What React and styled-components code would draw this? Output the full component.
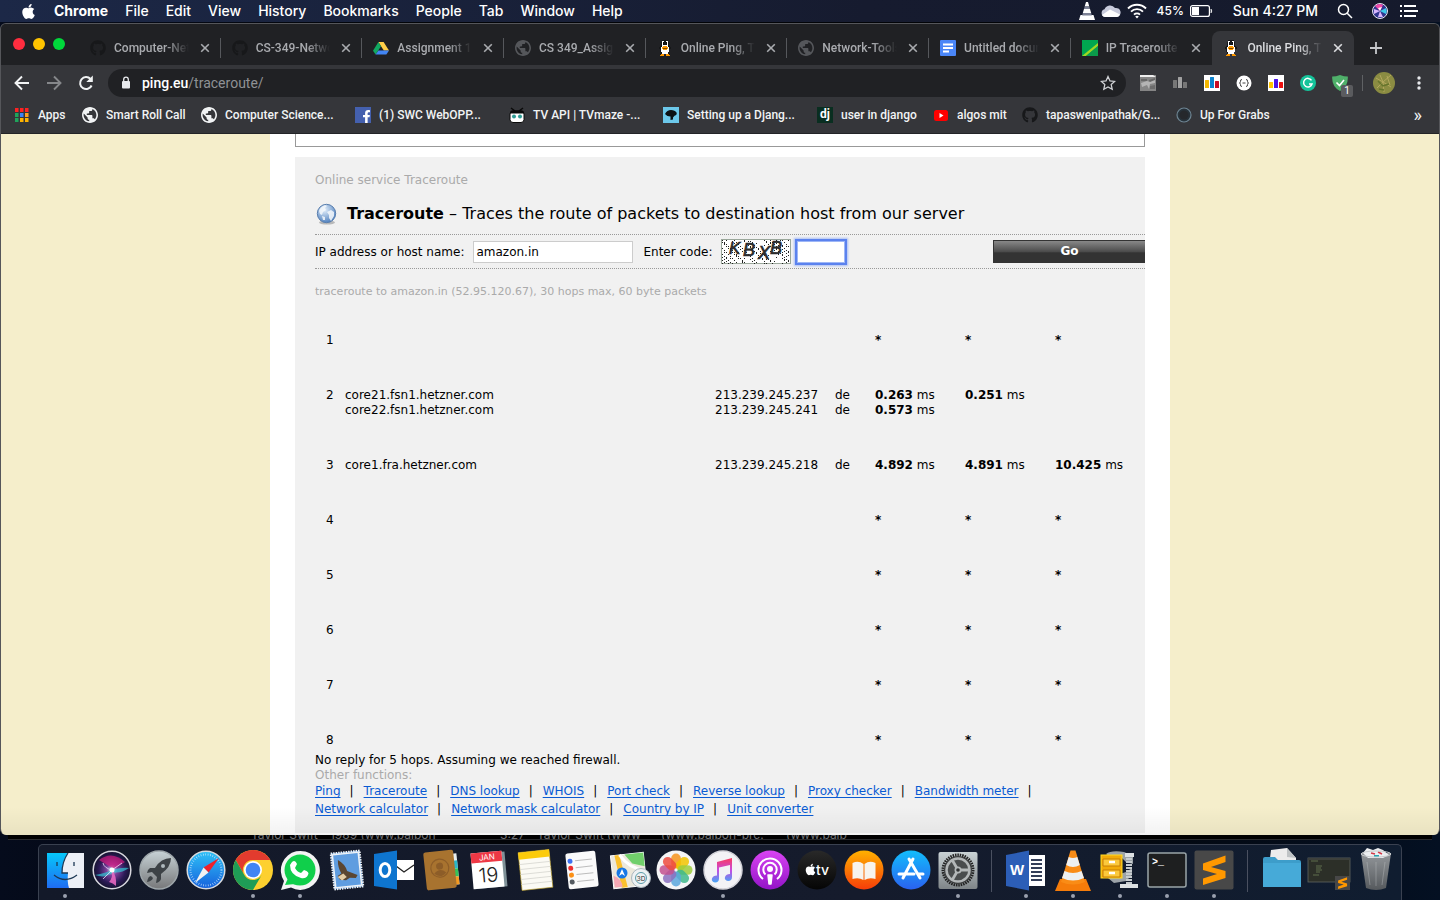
import React from "react";
import styled, { createGlobalStyle, css } from "styled-components";
import { FaApple, FaGithub, FaFacebookF } from "react-icons/fa";
import { MdPublic } from "react-icons/md";

const menuFont = css`font-family: Inter, "Liberation Sans", sans-serif;`;
const uiFont = css`font-family: Roboto, "Liberation Sans", sans-serif;`;

const GlobalStyle = createGlobalStyle`
  *, *::before, *::after { box-sizing: border-box; }
  html, body { margin: 0; background: #0a101f; overflow: hidden; }
  button, input { font: inherit; }
  svg { display: block; flex: none; }
`;

const Desktop = styled.div`
  height: 100vh;
  display: flex;
  flex-direction: column;
  background: linear-gradient(90deg, #050b1c, #020408 30%, #020408 70%, #041022);
`;

/* ---------- menu bar ---------- */

const MenuBar = styled.header`
  ${menuFont}
  height: 22px;
  flex: none;
  display: flex;
  align-items: center;
  justify-content: space-between;
  padding: 0 22px 0 20px;
  background: linear-gradient(90deg, #1c2847, #161b2f 60%, #151a2c);
  color: #fff;
  font-size: 14px;
  line-height: 22px;
`;
const MenuGroup = styled.nav`
  display: flex;
  align-items: center;
  gap: 17px;
`;
const MenuItem = styled.button`
  border: 0;
  padding: 0;
  background: none;
  color: #fff;
  font-weight: ${(p) => (p.$bold ? 700 : 500)};
  white-space: nowrap;
`;
const StatusGroup = styled.div`
  display: flex;
  align-items: center;
  gap: ${(p) => p.$gap}px;
  font-weight: 500;
  white-space: nowrap;
`;
const Percent = styled.span`font-size: 12px; margin-left: 4px;`;

/* ---------- browser window ---------- */

const Window = styled.main`
  flex: 1;
  min-height: 0;
  display: flex;
  flex-direction: column;
  margin-top: 1px;
  border: 1px solid #55565a;
  border-bottom: 0;
  border-radius: 6px;
  overflow: hidden;
  background: #35363a;
`;
const TabStrip = styled.div`
  ${uiFont}
  height: 41px;
  flex: none;
  display: flex;
  align-items: stretch;
  padding-top: 7px;
  background: #202124;
`;
const Lights = styled.div`
  display: flex;
  gap: 8px;
  padding: 7px 0 0 12px;
  width: 78px;
  flex: none;
`;
const Light = styled.span`
  width: 12px;
  height: 12px;
  border-radius: 50%;
  background: ${(p) => p.$color};
`;
const TabList = styled.div`
  flex: 1;
  display: flex;
  min-width: 0;
`;
const Tab = styled.div`
  flex: 1 1 0;
  min-width: 0;
  display: flex;
  align-items: center;
  gap: 8px;
  padding: 0 8px 0 11px;
  position: relative;
  border-radius: 8px 8px 0 0;
  background: ${(p) => (p.$active ? "#35363a" : "transparent")};
  color: ${(p) => (p.$active ? "#dcdde0" : "#a9abaf")};
  &::after {
    content: "";
    display: ${(p) => (p.$divider ? "block" : "none")};
    position: absolute;
    right: 0;
    top: 7px;
    width: 1px;
    height: 20px;
    background: #56585c;
  }
`;
const TabTitle = styled.span`
  flex: 1;
  min-width: 0;
  overflow: hidden;
  white-space: nowrap;
  font-size: 12px;
  line-height: 16px;
  font-weight: 500;
  mask-image: linear-gradient(90deg, #000 68%, transparent 100%);
`;
const IconButton = styled.button`
  display: grid;
  place-items: center;
  flex: none;
  width: ${(p) => p.$size || 16}px;
  height: ${(p) => p.$size || 16}px;
  border: 0;
  padding: 0;
  background: none;
  color: ${(p) => p.$color || "inherit"};
`;
const NewTab = styled.div`
  width: 85px;
  flex: none;
  display: flex;
  align-items: center;
  padding-left: 14px;
`;
const Toolbar = styled.div`
  ${uiFont}
  height: 35px;
  flex: none;
  display: flex;
  align-items: center;
  padding: 0 12px;
`;
const NavButtons = styled.div`
  display: flex;
  gap: 14px;
  width: 95px;
  flex: none;
`;
const Omnibox = styled.label`
  flex: 1;
  height: 28px;
  border-radius: 14px;
  background: #202124;
  display: flex;
  align-items: center;
  gap: 11px;
  padding: 0 10px 0 13px;
  font-size: 14px;
`;
const Address = styled.span`
  flex: 1;
  color: #8f9195;
  line-height: 20px;
  b { font-weight: 500; color: #fff; }
`;
const Extensions = styled.div`
  display: flex;
  align-items: center;
  gap: 16px;
  padding-left: 14px;
`;
const Separator = styled.span`
  width: 1px;
  height: 16px;
  margin-left: -2px;
  margin-right: -6px;
  background: #5f6164;
`;
const BookmarkBar = styled.nav`
  ${uiFont}
  height: 34px;
  flex: none;
  display: flex;
  align-items: center;
  gap: 16px;
  padding: 0 17px 3px 13px;
  border-bottom: 1px solid #232427;
  font-size: 12px;
`;
const Bookmark = styled.a`
  display: flex;
  align-items: center;
  gap: 8px;
  color: #f1f3f4;
  text-decoration: none;
  line-height: 16px;
  white-space: nowrap;
  font-weight: 500;
  span { width: ${(p) => p.$width}px; }
`;
const More = styled.button`
  margin-left: auto;
  border: 0;
  padding: 0;
  background: none;
  color: #f1f3f4;
  font-size: 18px;
  line-height: 16px;
`;

/* ---------- web page ---------- */

const Viewport = styled.div`
  flex: 1;
  min-height: 0;
  overflow: hidden;
  position: relative;
  display: flex;
  justify-content: center;
  background: #f5eecb;
  font-family: "DejaVu Sans", Verdana, sans-serif;
  font-size: 12px;
  line-height: 15px;
  color: #000;
  &::after {
    content: "";
    position: absolute;
    inset: auto 0 0 0;
    height: 28px;
    background: linear-gradient(transparent, rgba(0, 0, 0, 0.05));
  }
`;
const Page = styled.div`
  width: 900px;
  max-width: 100%;
  padding: 0 25px;
  background: #fff;
  display: flex;
  flex-direction: column;
`;
const UpperBox = styled.div`
  height: 13px;
  flex: none;
  border: 1px solid #999;
  border-top: 0;
  margin-bottom: 10px;
`;
const Panel = styled.section`
  flex: 1;
  background: #f1f1f1;
  padding: 16px 0 0 20px;
  margin-bottom: 2px;
`;
const Muted = styled.p`
  margin: 0;
  color: #aaa;
`;
const ResultLine = styled(Muted)`
  margin-top: 15px;
  font-size: 11px;
`;
const Title = styled.h1`
  display: flex;
  align-items: center;
  gap: 8px;
  margin: 14px 0 8px;
  font-size: 16px;
  line-height: 24px;
  font-weight: 400;
`;
const Form = styled.form`
  display: flex;
  align-items: center;
  height: 35px;
  border: 1px dotted #999;
  border-width: 1px 0;
`;
const FieldLabel = styled.label`
  padding-top: 2px;
`;
const Field = styled.input`
  width: ${(p) => p.$width}px;
  height: 22px;
  margin: 0 10px 0 9px;
  padding: 0 2px;
  border: 1px solid #ccc;
  border-radius: 0;
  background: #fff;
  color: #000;
`;
const CodeField = styled(Field)`
  margin: 0 0 0 6px;
  outline: 2px solid #5b82ee;
  border-color: #9db6f6;
  box-shadow: 0 0 2px 3px #a9bdf5;
`;
const Captcha = styled.svg`margin-left: 9px;`;
const GoButton = styled.button`
  width: 152px;
  height: 23px;
  margin-left: auto;
  padding: 0;
  border: 1px solid #333;
  border-right: 0;
  background: linear-gradient(#888, #4a4a4a 52%, #333 56%, #333);
  color: #fff;
  font-weight: 700;
`;
const Hops = styled.table`
  width: 100%;
  margin-top: -1px;
  border-collapse: collapse;
  table-layout: fixed;
  td {
    padding: 35px 0 5px;
    vertical-align: top;
    white-space: pre-line;
  }
  td:first-child { padding-left: 11px; }
`;
const Links = styled.nav`
  display: flex;
  flex-wrap: wrap;
  line-height: 18px;
  max-width: 760px;
  margin-top: -1px;
`;
const LinkItem = styled.span`
  white-space: nowrap;
  a { color: #0a5bd3; text-underline-offset: 2px; }
  i { font-style: normal; margin: 0 10px 0 9px; }
`;

/* ---------- strip of the window behind, and the dock ---------- */

const BehindStrip = styled.div`
  ${menuFont}
  height: 5px;
  flex: none;
  margin: 0 8px;
  overflow: hidden;
  display: flex;
  align-items: flex-end;
  border-bottom: 1px solid #2a2b2e;
  background: #000;
  color: #707276;
  font-size: 12px;
  line-height: 8px;
  white-space: nowrap;
  padding-left: 243px;
`;
const BehindCell = styled.span`
  width: ${(p) => p.$width}px;
`;
const DockArea = styled.footer`
  flex: none;
  display: flex;
  justify-content: center;
  height: 60px;
  padding-top: 4px;
`;
const Dock = styled.div`
  display: flex;
  align-items: flex-start;
  padding: 3px 2px 0;
  border: 1px solid #3a4150;
  border-bottom: 0;
  border-radius: 5px 5px 0 0;
  background: linear-gradient(90deg, #131929, #151b2c 60%, #101d30);
`;
const DockButton = styled.button`
  width: 47px;
  padding: 0;
  border: 0;
  background: none;
  display: flex;
  flex-direction: column;
  align-items: center;
  &::after {
    content: "";
    width: 4px;
    height: 4px;
    margin-top: 2px;
    border-radius: 50%;
    background: ${(p) => (p.$running ? "#9aa0ae" : "transparent")};
  }
`;
const DockRule = styled.span`
  width: 1px;
  height: 42px;
  margin: 2px 10px 0;
  background: #4a5060;
`;

/* ---------- small icons ---------- */

const Svg = ({ s = 16, w, h, box, children, ...rest }) => (
  <svg width={w || s} height={h || s} viewBox={box || "0 0 16 16"} fill="none" aria-hidden="true" {...rest}>{children}</svg>
);
const Close = () => (
  <Svg><path d="M4.2 4.2l7.6 7.6M11.8 4.2l-7.6 7.6" stroke="currentColor" strokeWidth="1.6" /></Svg>
);
const Penguin = () => (
  <Svg shapeRendering="crispEdges">
    <path d="M5 0h6v2h1v4h1v1h1v2h-2v3h-1v2H4v-2H3V9H2V7h1V6h1V2h1z" fill="#161719" />
    <path d="M5 1h2v4h2V1h2v6h1v5h-1v2H5v-2H4V7h1z" fill="#fff" />
    <path d="M6 2h1v3H6zM9 2h1v3H9z" fill="#111" />
    <path d="M6 6h4v1h1v2h-1v1H6V9H5V7h1zM4 14h3v2H3v-1h1zM9 14h3v1h1v1H9z" fill="#ff9800" />
    <path d="M6 8h4v1H6z" fill="#7b4a00" />
  </Svg>
);
const Drive = () => (
  <Svg>
    <path d="M5.4 2h5.2L16 10.6h-5.2z" fill="#ffcf48" />
    <path d="M5.4 2L0 10.8 2.6 14.6 8 6.2z" fill="#11a861" />
    <path d="M5.4 10.6H16L13.4 14.6H2.6z" fill="#4285f4" />
  </Svg>
);
const Docs = () => (
  <Svg><rect width="16" height="16" rx="1" fill="#4a86f7" /><path d="M3 4.5h10M3 8h10M3 11.5h6" stroke="#fff" strokeWidth="1.8" /></Svg>
);
const GreenSquare = () => (
  <Svg><path d="M0 0h16v16H0z" fill="#00a650" /><path d="M16 3v3L4 16H0z" fill="#9fd622" /><path d="M16 6v10H4z" fill="#0b9a4a" /></Svg>
);
const Github = ({ s = 16 }) => <FaGithub size={s} color="#17181a" />;
const Globe = ({ color }) => <Svg box="2 2 20 20"><MdPublic size={24} color={color} /></Svg>;
const Apps = () => (
  <Svg>{[0, 1, 2].map((r) => [0, 1, 2].map((c) => (
    <rect key={`${r}${c}`} x={1 + c * 5} y={1 + r * 5} width="3.500" height="4"
      fill={[["#f22", "#f22", "#f22"], ["#1fa45b", "#3b82f6", "#ff9f1c"], ["#1fa45b", "#ffb300", "#ffb300"]][r][c]} />
  )))}</Svg>
);
const Facebook = () => (
  <Svg><path d="M0 0h16v16H0z" fill="#4460ae" /><FaFacebookF x="5" y="3" size={13} color="#fff" /></Svg>
);
const TvMaze = () => (
  <Svg>
    <path d="M2 1l4 3M14 1l-4 3" stroke="#0a0a0a" strokeWidth="1.5" />
    <rect x="1" y="4" width="14" height="11.500" rx="3" fill="#fff" stroke="#0a0a0a" strokeWidth="1" />
    <path d="M3 3.500h10q2 0 2 3H1q0-3 2-3z" fill="#0a0a0a" />
    <circle cx="5" cy="9.500" r="2" fill="#2f9c95" /><circle cx="11" cy="9.500" r="2" fill="#2f9c95" />
  </Svg>
);
const Setting = () => (
  <Svg><path d="M0 0h16v16H0z" fill="#6cc8ea" /><path d="M2 7q2-4 6-4 4 0 5.500 2.500Q14.500 8 11.500 8.800L10 10.500v2L7.500 13V9.500Q4 9.500 2 7z" fill="#0b1114" /></Svg>
);
const DjangoTile = styled.span`
  && { width: 16px; }
  height: 16px;
  background: #092e20;
  color: #fff;
  font-size: 12px;
  line-height: 15px;
  font-weight: 700;
  text-align: center;
`;
const Youtube = () => (
  <Svg><rect x="1" y="3" width="14" height="11" rx="2.500" fill="#f00" /><path d="M6.500 6v5l4-2.500z" fill="#fff" /></Svg>
);
const Ring = () => (
  <Svg><circle cx="8" cy="8" r="7" stroke="#6d8492" strokeWidth="1.200" fill="#27323a" /><circle cx="8" cy="8" r="4.500" fill="#25282c" /></Svg>
);
const Vlc = () => (
  <Svg w={16} h={18} box="0 0 16 18">
    <path d="M7 0h2l1.300 4.500H5.700zM5 7h6l1.200 4H3.800zM1.500 13h13L16 18H0z" fill="#fff" />
    <path d="M5.700 4.500h4.600L11 7H5zM3.800 11h8.400l.6 2.500H3.200z" fill="#7d8296" />
  </Svg>
);
const Cloud = () => (
  <Svg w={20} h={14} box="0 0 20 14">
    <path d="M4 13a4 4 0 01-.500-7.800A6 6 0 0114 4a4.600 4.600 0 012 9z" fill="#c8cbdc" />
    <path d="M1 11l8-5.500 10 5a3.500 3.500 0 01-3 2.500H4a4 4 0 01-3-2z" fill="#fff" />
  </Svg>
);
const Wifi = () => (
  <Svg w={20} h={16} box="0 0 20 16" stroke="#fff" strokeWidth="1.900">
    <path d="M1 5.500a12.800 12.800 0 0118 0M4 8.600a8.500 8.500 0 0112 0M7 11.600a4.300 4.300 0 016 0" /><path d="M10 15.500l-1.800-2q1.800-1.400 3.600 0z" fill="#fff" stroke="none" />
  </Svg>
);
const Battery = () => (
  <Svg w={24} h={12} box="0 0 24 12">
    <rect x=".6" y=".6" width="18.800" height="10.800" rx="2" stroke="#fff" strokeWidth="1.200" />
    <rect x="2" y="2" width="7" height="8" fill="#fff" /><path d="M21 4q1.600 2 0 4z" fill="#fff" stroke="#fff" strokeWidth=".6" />
  </Svg>
);
const Search = () => (
  <Svg stroke="#fff" strokeWidth="1.500"><circle cx="6.500" cy="6.500" r="5" /><path d="M10.200 10.200L15 15" /></Svg>
);
const SiriSmall = () => (
  <Svg><circle cx="8" cy="8" r="7.500" fill="#30358e" stroke="#e7e7ef" /><path d="M8 8L3 3a7 7 0 018-1z" fill="#ee4aa8" /><path d="M8 8l6-3a7 7 0 010 6z" fill="#3dc8e8" /><path d="M8 8l-6 3V6zM8 8l3 6H6z" fill="#d9b8ff" /><path d="M8 8L6 5l4-1z" fill="#fff" /></Svg>
);
const ListIcon = () => (
  <Svg w={18} h={12} box="0 0 18 12" stroke="#fff" strokeWidth="2"><path d="M0 1h2M4 1h12M0 6h2M4 6h14M0 11h2M4 11h12" /></Svg>
);
const Arrow = ({ flip }) => (
  <Svg s={18} box="0 0 18 18" stroke={flip ? "#85878a" : "#f1f3f4"} strokeWidth="1.900">
    <path d={flip ? "M2 9h13M9 2.500L15.500 9 9 15.500" : "M16 9H3M9 2.500L2.500 9 9 15.500"} />
  </Svg>
);
const Reload = () => (
  <Svg s={18} box="0 0 18 18"><path d="M14.600 11.500A6 6 0 1113.500 5" stroke="#f1f3f4" strokeWidth="2" /><path d="M15.800 1.500V8H9.300z" fill="#f1f3f4" /></Svg>
);
const Lock = () => (
  <Svg w={10} h={14} box="0 0 10 14"><rect x="1" y="5" width="8" height="7.500" rx="1" fill="#e8eaed" /><path d="M2.700 5V3.500a2.300 2.300 0 014.600 0V5" stroke="#e8eaed" strokeWidth="1.300" /></Svg>
);
const Star = () => (
  <Svg><path d="M8 1.500l2 4.400 4.700.5-3.500 3.200 1 4.700L8 11.900l-4.200 2.400 1-4.700L1.300 6.400 6 5.900z" stroke="#cfd1d4" strokeWidth="1.300" /></Svg>
);
const Bars = ({ bg, colors, heights }) => (
  <Svg>{bg && <path d="M0 0h16v16H0z" fill={bg} />}{heights.map((h, i) => <rect key={i} x={1 + i * 5} y={13 - h} width="4" height={h} rx=".5" fill={colors[i]} />)}</Svg>
);
const extensions = [
  ["Image tool", <Svg><path d="M0 0h16v16H0z" fill="#858585" /><path d="M0 0h13l3 2H0z" fill="#eee" /><path d="M1 4h6v2H1zM9 5l6-2v3l-5 2z" fill="#666" /><path d="M1 8l6-2 3 1 5-2v3l-5 1-1 5-2-4-5 2z" fill="#b4b4b4" /><path d="M10 11l5-1v4h-5z" fill="#6c6c6c" /></Svg>],
  ["Statistics", <Bars colors={["#777", "#a2a2a2", "#777"]} heights={[8, 11, 6]} />],
  ["Traffic", <Bars bg="#fff" colors={["#f3b600", "#0d83cf", "#c90c23"]} heights={[8, 11, 7]} />],
  ["Brackets", <Svg><circle cx="8" cy="8" r="7.500" fill="#fff" /><path d="M6 4.500q-1.800 0-1.500 1.800Q4.500 8 3.400 8q1.100 0 1.100 1.700Q4.200 11.500 6 11.500M10 4.500q1.800 0 1.500 1.800Q11.500 8 12.600 8q-1.100 0-1.100 1.700Q11.800 11.500 10 11.500M6.500 8h3" stroke="#444" strokeWidth="1" /></Svg>],
  ["Charts", <Bars bg="#fff" colors={["#ffc400", "#4a12e8", "#e11"]} heights={[6, 9, 6]} />],
  ["Grammar", <Svg><circle cx="8" cy="8" r="8" fill="#15c39a" /><path d="M11.500 5.300A4.300 4.300 0 1012 9H9" stroke="#fff" strokeWidth="1.500" /></Svg>],
];
const Shield = () => (
  <Svg><path d="M8 0q4 1.500 7.800 1.500Q16.500 11.500 8 16-.5 11.500.2 1.500 4 1.500 8 0z" fill="#4fb06a" /><path d="M4.500 7.500l3 3L12 5" stroke="#fff" strokeWidth="1.600" /></Svg>
);
const ShieldHolder = styled.span`position: relative; width: 16px;`;
const Badge = styled.span`
  position: absolute;
  left: 9px;
  top: 10px;
  width: 12px;
  height: 12px;
  border-radius: 2px;
  background: #5a5b5e;
  color: #fff;
  font-size: 10px;
  line-height: 12px;
  text-align: center;
`;
const Avatar = () => (
  <Svg s={22} box="0 0 22 22"><circle cx="11" cy="11" r="11" fill="#8b8c42" /><path d="M3 6l7 4 8-7M4 16l6-6 8 5M7 3l3 7 1 10M14 4l3 9" stroke="#b3a85d" strokeWidth="1" /><path d="M5 9l5 5 6-2M6 17l5 1" stroke="#66752c" strokeWidth="1.500" /></Svg>
);
const Dots = () => (
  <Svg><g fill="#e8eaed"><circle cx="8" cy="3" r="1.700" /><circle cx="8" cy="8" r="1.700" /><circle cx="8" cy="13" r="1.700" /></g></Svg>
);
const WorldIcon = () => (
  <Svg s={24} box="0 0 24 24">
    <defs><radialGradient id="world" cx=".4" cy=".3" r=".8"><stop offset="0" stopColor="#e3effb" /><stop offset="1" stopColor="#3f74b8" /></radialGradient></defs>
    <ellipse cx="12" cy="20.500" rx="8" ry="2" fill="#b9b9b9" />
    <circle cx="11.500" cy="11.500" r="9.200" fill="url(#world)" stroke="#5a7fae" />
    <path d="M4 9q1-4 6-6l2 1-2 2 1 2-3 2-1 3-2-1zM12 10l4-2 3 2v4l-3 5-2-3v-3zM7 14l3 1v3l-2 0z" fill="#f4f8fc" opacity=".85" />
  </Svg>
);

const noise = Array.from({ length: 420 }, (_, i) => {
  const v = (i * 7919 + i * i * 131) % 1656;
  return `M${1 + (v % 68)} ${1 + Math.floor(v / 69)}h1v1h-1z`;
}).join("");
const CaptchaImage = () => (
  <Captcha width="70" height="25" viewBox="0 0 70 25" role="img" aria-label="Code picture">
    <rect x=".5" y=".5" width="69" height="24" fill="#fff" stroke="#9aa79a" />
    <path d={noise} fill="#222" shapeRendering="crispEdges" />
    <g fill="#2c2c2c" stroke="#2c2c2c" strokeWidth=".7" fontFamily="Liberation Sans" fontStyle="italic" fontSize="18">
      <text x="8" y="15" fontSize="17">K</text><text x="22" y="17">B</text><text x="37" y="20">X</text><text x="49" y="15">B</text>
    </g>
  </Captcha>
);

/* ---------- dock icons, drawn round the origin ---------- */

const Disc = ({ fill, stroke = "none", r = 19.5 }) => <circle r={r} fill={fill} stroke={stroke} strokeWidth="1.5" />;
const Grad = ({ id, a, b, m }) => (
  <linearGradient id={id} x1="0" y1="0" x2="0" y2="1"><stop stopColor={a} />{m && <stop offset=".5" stopColor={m} />}<stop offset="1" stopColor={b} /></linearGradient>
);
const sublimeMark = "M-11-6.500L11.500-14.500V-8L-3-3 11.500 1V8L-11 15V8.500L3 4-11 0z";
const petals = ["#f7941d", "#f2c400", "#9ccc3c", "#3fb98b", "#5aa7dd", "#8a70c0", "#c2508f", "#ee4b3e"];

const apps = {
  Finder: <><Grad id="fd" a="#06c8fb" b="#1f6cf2" /><rect x="-18" y="-17" width="37" height="35" fill="url(#fd)" /><path d="M3-17q-6 9-6 20H3q-1 9 1 15h15v-35z" fill="#eceff6" /><path d="M-8-8v4M9-8v4M-11 5Q0 14 12 5M3-17Q-3-8-3 3H3" stroke="#1c3754" strokeWidth="1.300" fill="none" /></>,
  Siri: <><radialGradient id="sr"><stop stopColor="#c9ecf5" /><stop offset=".3" stopColor="#7b3f9a" /><stop offset=".7" stopColor="#2b1a56" /><stop offset="1" stopColor="#14122e" /></radialGradient><Disc fill="url(#sr)" stroke="#d7d7de" r={18.8} /><path d="M-13-10Q0-20 13-8L2-1z" fill="#e01c82" opacity=".65" /><path d="M-17 5Q-6 3 0 0q10-3 17-2Q8 4 1 2-6 9-17 5z" fill="#33c9d6" opacity=".7" /><path d="M0 0q5 6 4 16-3-3-7-4Q1 8 0 0z" fill="#f06bc4" opacity=".85" /><path d="M0 0q-8-2-9-7M0 0l-9 9M0 0l10-7" stroke="#e9dcf7" strokeWidth="1" fill="none" opacity=".8" /><circle r="2.500" fill="#fff" /></>,
  Launchpad: <><Grad id="lp" a="#c7d2d6" b="#77787a" /><Disc fill="url(#lp)" stroke="#9ea6aa" r={19} /><path d="M12-12Q2-12-4-2l-5 0q-3 2-3 5l5-1 5 5-1 6q4-1 5-4V4Q12-3 12-12z" fill="#3d4246" /><circle cx="4" cy="-4" r="2" fill="#aeb8bc" /><path d="M-8 6q-3 0-4 6 5-1 6-4z" fill="#3d4246" /></>,
  Safari: <><Grad id="sf" a="#2ec2f7" b="#1660dc" /><Disc fill="url(#sf)" stroke="#d7dade" r={18.8} /><circle r="15.500" fill="none" stroke="#cfeaff" strokeWidth="2" strokeDasharray=".6 1.800" /><path d="M13-12L2.500 2.500-2.500-2.500z" fill="#f0202c" /><path d="M-11 13l8.500-15.500 5 5z" fill="#f2f2f2" /></>,
  Chrome: <><Disc fill="#fdd02f" r={20} /><path d="M-17.300-10A20 20 0 0117.300-10H0A10 10 0 00-8.700 5z" fill="#e23b2e" /><path d="M-17.300-10A20 20 0 000 20L8.700 5A10 10 0 01-8.700 5z" fill="#1f9d56" /><circle r="9" fill="#fff" /><circle r="7.300" fill="#4285f4" /></>,
  WhatsApp: <><path d="M-19 20l3-9A19.500 19.500 0 11-9 17.500z" fill="#f4f4f4" /><circle cx="0" cy="0" r="15.500" fill="#10cf4b" /><path d="M-15 15l4-9 6 8z" fill="#10cf4b" /><path d="M-8-8q3-3 5 2l-2 4q2 4 6 5l3-3q6 2 4 5-2 4-7 3-11-3-11-13z" fill="#fff" /></>,
  Mail: <g transform="rotate(-6)"><rect x="-14.500" y="-18" width="29" height="36" fill="#6ba5e5" stroke="#eef2f6" strokeWidth="2" strokeDasharray="1.500 1" /><rect x="-13" y="-16.500" width="26" height="33" fill="#5f9de0" stroke="#eef2f6" strokeWidth="1.500" /><path d="M-8-11q7 5 8 12l10 5-2 3-6-1-4 2-6-1-2-4 4-2Q-9-4-8-11z" fill="#5b4632" /><path d="M-10 6l6-3 3 4-5 3z" fill="#e5cda6" /></g>,
  Outlook: <><rect x="1" y="-10" width="19" height="20" fill="#fff" /><path d="M2-4l8 6L20-5" stroke="#222" strokeWidth="1.300" fill="none" /><path d="M-20-16L3-19.500v39L-20 16z" fill="#0e75cf" /><ellipse cx="-9" cy="0" rx="4.800" ry="6.500" fill="none" stroke="#fff" strokeWidth="3" /></>,
  Contacts: <g transform="rotate(-6)"><rect x="10" y="-15" width="7" height="31" fill="#e8eef0" /><path d="M13-8h4v8h-4z" fill="#2ab6c9" /><path d="M13 0h4v8h-4z" fill="#35c35b" /><path d="M13 8h4v8h-4z" fill="#f59b23" /><rect x="-16" y="-19" width="30" height="38" rx="2" fill="#a8732f" /><circle cx="-1" cy="-2" r="9" fill="none" stroke="#8d5d28" strokeWidth="1.200" /><circle cx="-1" cy="-4" r="3.500" fill="#8d5d28" /><path d="M-7 3q6-6 12 0-6 6-12 0z" fill="#8d5d28" /></g>,
  Calendar: <g transform="rotate(-5)"><rect x="-15" y="-17" width="33" height="35" fill="#7f9198" /><rect x="-16" y="-18" width="31" height="36" fill="#fff" /><path d="M-16-18h31v10h-31z" fill="#ee3845" /><text y="-10" textAnchor="middle" fontSize="8" fill="#fff" fontFamily="Inter">JAN</text><text y="12" textAnchor="middle" fontSize="20" fontWeight="300" fill="#222" fontFamily="Inter">19</text></g>,
  Notes: <g transform="rotate(-6)"><rect x="-15" y="-19" width="31" height="38" fill="#fbfaf4" stroke="#b89a1d" strokeWidth=".6" /><path d="M-15-19h31v7h-31z" fill="#fccb0b" /><path d="M-15-7h31M-15-2h31M-15 3h31M-15 8h31M-15 13h31" stroke="#d6d6d0" strokeWidth=".8" /></g>,
  Reminders: <g transform="rotate(-6)"><rect x="-15" y="-18" width="30" height="36" rx="2" fill="#fafafa" /><path d="M-6-10h17M-6-3h17M-6 4h17M-6 11h17" stroke="#bcbcbc" /><circle cx="-11" cy="-10" r="2.500" fill="#3d70ef" /><circle cx="-11" cy="-3" r="2.500" fill="#ee2e2e" /><circle cx="-11" cy="4" r="2.500" fill="#fb9016" /><circle cx="-11" cy="11" r="2.500" fill="#555b61" /></g>,
  Maps: <><g transform="rotate(-6)"><rect x="-17" y="-16" width="33" height="33" fill="#ece8dc" stroke="#fff" /><path d="M-3-16h19v14L4-6z" fill="#71cf6b" /><path d="M-13-16h5l5 33h-6z" fill="#fbc02d" /><path d="M-16 4v12h8q0-8-8-12z" fill="#f5a8b4" /><path d="M-8-16Q0-2 15 2" stroke="#fff" strokeWidth="3" fill="none" /></g><circle cx="-7" cy="3" r="5.500" fill="#1878e6" /><path d="M-7-1l3 7-3-2-3 2z" fill="#fff" /><circle cx="12" cy="8" r="9.500" fill="#edf1f3" stroke="#aab6bd" /><circle cx="12" cy="8" r="5.500" fill="none" stroke="#5b9cab" /><text x="12" y="10.500" textAnchor="middle" fontSize="6.500" fontFamily="Inter" fill="#333">3D</text></>,
  Photos: <><Disc fill="#f5f5f6" />{petals.map((c, i) => <rect key={c} x="-4.800" y="-16.500" width="9.600" height="15" rx="4.800" fill={c} opacity=".85" transform={`rotate(${i * 45})`} />)}</>,
  Music: <><Disc fill="#f3f3f6" stroke="#d4d4da" r={19} /><Grad id="mu" a="#fb3b5d" b="#45a7f5" m="#c64be2" /><path d="M-6-8L9-12V7q0 4-4 4-4-1-3-4 1-3 5-3V-5L-4-2.500v11q0 4-4 4-4-1-3-4 1-3 5-3z" fill="url(#mu)" /></>,
  Podcasts: <><Grad id="pc" a="#d944f2" b="#9314c8" /><Disc fill="url(#pc)" /><g fill="none" stroke="#fff" strokeWidth="2"><path d="M-7 9a11.500 11.500 0 1114 0M-4.500 4.500a6.700 6.700 0 119 0" /></g><circle cy="-1" r="3" fill="#fff" /><path d="M-2 5h4l-1 9h-2z" fill="#fff" stroke="#fff" strokeWidth="1.500" strokeLinejoin="round" /></>,
  TV: <><Grad id="tv" a="#292929" b="#050505" /><Disc fill="url(#tv)" /><FaApple x="-13" y="-7" size={13} color="#fff" /><text x="-1" y="5" fontSize="14" fontWeight="500" fill="#fff" fontFamily="Inter">tv</text></>,
  Books: <><Grad id="bk" a="#ffb100" b="#f63d09" /><Disc fill="url(#bk)" /><path d="M-.5-6q-5-4-11-1V9q6-2 11 1zM.5-6q5-4 11-1V9q-6-2-11 1z" fill="#f7f3ee" /></>,
  "App Store": <><Grad id="as" a="#12bdfc" b="#2a62f0" /><Disc fill="url(#as)" /><path d="M2-11L-8 8M-2-11L9 8M-12 4H3M7 4h5" stroke="#fff" strokeWidth="3" strokeLinecap="round" /></>,
  Settings: <><Grad id="st" a="#c9d2d5" b="#7f8588" /><rect x="-19.500" y="-18" width="39" height="37" rx="2" fill="url(#st)" /><circle r="15" fill="none" stroke="#222" strokeWidth="3" strokeDasharray="1.500 .9" /><circle r="14" fill="#3c3e3f" /><circle r="11.500" fill="#494c4d" stroke="#b3b7b8" strokeWidth="2.500" /><path d="M0 0L-5.500-9.500M0 0H11M0 0l-5.500 9.500" stroke="#b3b7b8" strokeWidth="2.800" /><circle r="3.500" fill="#b3b7b8" /><circle r="1.800" fill="#303233" /></>,
  Word: <><rect x="1" y="-15" width="18" height="31" fill="#fff" /><path d="M5-10h11M5-6h11M5-2h11M5 2h11M5 6h11M5 10h11" stroke="#333e58" strokeWidth="1.800" /><path d="M-20-15L3-19.500v40L-20 16z" fill="#2c5eb7" /><text x="-16" y="5" fontSize="15" fontWeight="700" fill="#fff" fontFamily="Liberation Sans">W</text></>,
  VLC: <><path d="M-13 9h26l5 12h-36z" fill="#f57c0a" /><path d="M-2.500-19.500h5L12 12q-12 5-24 0z" fill="#f98c16" /><path d="M-4.300-13q4.300 2 8.600 0l2.500 8q-6.800 4-13.600 0zM-8.500 1q8.500 4 17 0l2.500 7q-11 5-22 0z" fill="#edf0f2" /></>,
  Archive: <><path d="M-14-16q5-4 18-2l9 4v8l-7-2-5-5-10 1zM-12 8l6 5 12-2 6-6v-7l-6 4z" fill="#9ca3a8" /><rect x="-19" y="-15" width="21" height="23" fill="#f2ab09" stroke="#ffdc25" /><path d="M-17-11H0v7h-17zM-17 0H0v7h-17z" fill="#fbc93c" stroke="#c77e04" /><path d="M-11-8h6M-11 3h6" stroke="#fff" strokeWidth="2.500" /><path d="M9-15v30" stroke="#c7cccf" strokeWidth="6" strokeDasharray="2 1" /><path d="M5-15h9M0 16h18" stroke="#dde1e3" strokeWidth="4" /></>,
  Terminal: <><rect x="-19" y="-17" width="38" height="34" rx="2" fill="#1e1f20" stroke="#9aa5a8" strokeWidth="1.500" /><text x="-15" y="-5" fontSize="10" fontWeight="700" fill="#fff" fontFamily="Liberation Mono">&gt;_</text></>,
  Sublime: <><rect x="-19.500" y="-19.500" width="39" height="39" rx="2" fill="#484848" /><path d={sublimeMark} fill="#ff9800" /></>,
  Downloads: <><path d="M-11-20l16-2 9 10v8h-27z" fill="#ececec" /><path d="M5-22v9l9 1z" fill="#bfc3c5" /><path d="M-19-11q0-2 2-2h10l3 3h21q2 0 2 2V14q0 3-2 3h-34q-2 0-2-3z" fill="#3d9dca" /><path d="M-19-7h38v24h-38z" fill="#46aad8" /></>,
  "Minimised editor": <><rect x="-21" y="-12" width="42" height="24" fill="#2c2f28" stroke="#5f6460" strokeWidth=".8" /><path d="M-18-9h7M-13-4h6M-13-2h5M-13 0h6M-13 2h4M-16 5h6" stroke="#6c7d56" strokeWidth=".8" /><path d="M-21-12h42v2h-42z" fill="#3d403c" /><rect x="6" y="6" width="15" height="14" fill="#474747" /><path d={sublimeMark} fill="#ff9800" transform="translate(13.500 13) scale(.4)" /></>,
  Trash: <><Grad id="tr" a="#a2a5a7" b="#5d6062" /><path d="M-15-17h30L10 18q-10 4-20 0z" fill="url(#tr)" opacity=".9" /><path d="M-13-17l4-5 6 2 5-2 5 2 6 5-6 3H-8z" fill="#eceef0" /><path d="M-5-17l4 1M2-18l4 2" stroke="#d33a48" strokeWidth="1.500" /><path d="M-2-14h5" stroke="#27a5b3" strokeWidth="2" /><path d="M-9-8L-6 15M0-8v24M9-8L6 15" stroke="#c8cbcd" opacity=".35" /><ellipse cy="-16" rx="15" ry="3" fill="none" stroke="#c8cbcd" /></>,
};
const running = new Set(["Finder", "Chrome", "WhatsApp", "Music", "Settings", "Word", "VLC", "Archive", "Terminal", "Sublime"]);

/* ---------- data ---------- */

const tabs = [
  ["Computer-Net", <Github />],
  ["CS-349-Netwo", <Github />],
  ["Assignment 1 -", <Drive />],
  ["CS 349_Assign", <Globe color="#55575b" />],
  ["Online Ping, Tra", <Penguin />],
  ["Network-Tools", <Globe color="#55575b" />],
  ["Untitled docum", <Docs />],
  ["IP Traceroute T", <GreenSquare />],
  ["Online Ping, Tra", <Penguin />],
];
const bookmarks = [
  ["Apps", 28, <Apps />],
  ["Smart Roll Call", 79, <Globe color="#f1f3f4" />],
  ["Computer Science...", 114, <Globe color="#f1f3f4" />],
  ["(1) SWC WebOPP...", 114, <Facebook />],
  ["TV API | TVmaze -...", 114, <TvMaze />],
  ["Setting up a Djang...", 114, <Setting />],
  ["user in django", 76, <DjangoTile>dj</DjangoTile>],
  ["algos mit", 49, <Youtube />],
  ["tapaswenipathak/G...", 114, <Github />],
  ["Up For Grabs", 72, <Ring />],
];
const star = { star: true };
const silent = { times: [[star], [star], [star]] };
const hops = [
  silent,
  { host: "core21.fsn1.hetzner.com\ncore22.fsn1.hetzner.com", ip: "213.239.245.237\n213.239.245.241", cc: "de\nde", times: [["0.263", "0.573"], ["0.251"], []] },
  { host: "core1.fra.hetzner.com", ip: "213.239.245.218", cc: "de", times: [["4.892"], ["4.891"], ["10.425"]] },
  silent, silent, silent, silent, silent,
];
const links = ["Ping", "Traceroute", "DNS lookup", "WHOIS", "Port check", "Reverse lookup", "Proxy checker", "Bandwidth meter", "Network calculator", "Network mask calculator", "Country by IP", "Unit converter"];

const DockIcon = ({ name }) => (
  <DockButton $running={running.has(name)} aria-label={name}>
    <svg width="46" height="44" viewBox="-23 -22 46 44" aria-hidden="true">{apps[name]}</svg>
  </DockButton>
);

export default function App() {
  return (
    <Desktop>
      <GlobalStyle />
      <MenuBar>
        <MenuGroup>
          <FaApple size={17} />
          {["Chrome", "File", "Edit", "View", "History", "Bookmarks", "People", "Tab", "Window", "Help"].map((m, i) => (
            <MenuItem key={m} $bold={i === 0}>{m}</MenuItem>
          ))}
        </MenuGroup>
        <StatusGroup $gap={19}>
          <StatusGroup $gap={6}><Vlc /><Cloud /><Wifi /><Percent>45%</Percent><Battery /></StatusGroup>
          <span>Sun 4:27 PM</span>
          <Search />
          <StatusGroup $gap={12}><SiriSmall /><ListIcon /></StatusGroup>
        </StatusGroup>
      </MenuBar>

      <Window>
        <TabStrip>
          <Lights><Light $color="#ff2d3f" /><Light $color="#ffc400" /><Light $color="#00d93b" /></Lights>
          <TabList>
            {tabs.map(([title, icon], i) => (
              <Tab key={i} $active={i === 8} $divider={i < 7}>
                {icon}
                <TabTitle>{title}</TabTitle>
                <IconButton aria-label="Close tab"><Close /></IconButton>
              </Tab>
            ))}
          </TabList>
          <NewTab>
            <IconButton aria-label="New tab" $color="#c7c9cc"><Svg><path d="M8 2v12M2 8h12" stroke="currentColor" strokeWidth="1.800" /></Svg></IconButton>
          </NewTab>
        </TabStrip>
        <Toolbar>
          <NavButtons>
            <IconButton $size={18} aria-label="Back"><Arrow /></IconButton>
            <IconButton $size={18} aria-label="Forward"><Arrow flip /></IconButton>
            <IconButton $size={18} aria-label="Reload"><Reload /></IconButton>
          </NavButtons>
          <Omnibox>
            <Lock />
            <Address><b>ping.eu</b>/traceroute/</Address>
            <Star />
          </Omnibox>
          <Extensions>
            {extensions.map(([name, icon]) => <IconButton key={name} aria-label={name}>{icon}</IconButton>)}
            <ShieldHolder><Shield /><Badge>1</Badge></ShieldHolder>
            <Separator />
            <Avatar />
            <IconButton aria-label="Menu"><Dots /></IconButton>
          </Extensions>
        </Toolbar>
        <BookmarkBar>
          {bookmarks.map(([label, width, icon]) => (
            <Bookmark key={label} href="#" $width={width}>{icon}<span>{label}</span></Bookmark>
          ))}
          <More aria-label="More bookmarks">»</More>
        </BookmarkBar>

        <Viewport>
          <Page>
            <UpperBox />
            <Panel>
              <Muted>Online service Traceroute</Muted>
              <Title><WorldIcon /><span><b>Traceroute</b> – Traces the route of packets to destination host from our server</span></Title>
              <Form onSubmit={(e) => e.preventDefault()}>
                <FieldLabel htmlFor="host">IP address or host name:</FieldLabel>
                <Field id="host" $width={160} defaultValue="amazon.in" />
                <FieldLabel htmlFor="code">Enter code:</FieldLabel>
                <CaptchaImage />
                <CodeField id="code" $width={48} />
                <GoButton>Go</GoButton>
              </Form>
              <ResultLine>traceroute to amazon.in (52.95.120.67), 30 hops max, 60 byte packets</ResultLine>
              <Hops>
                <colgroup>
                  <col width="30" /><col /><col width="120" /><col width="40" /><col width="90" /><col width="90" /><col width="90" />
                </colgroup>
                <tbody>
                  {hops.map((hop, n) => (
                    <tr key={n}>
                      <td>{n + 1}</td><td>{hop.host}</td><td>{hop.ip}</td><td>{hop.cc}</td>
                      {hop.times.map((list, c) => (
                        <td key={c}>
                          {list.map((t, k) => <div key={k}>{t.star ? <b>*</b> : <><b>{t}</b> ms</>}</div>)}
                        </td>
                      ))}
                    </tr>
                  ))}
                </tbody>
              </Hops>
              <div>No reply for 5 hops. Assuming we reached firewall.</div>
              <Muted>Other functions:</Muted>
              <Links>
                {links.map((l, i) => (
                  <LinkItem key={l}><a href="#">{l}</a>{i < links.length - 1 && <i>|</i>}</LinkItem>
                ))}
              </Links>
            </Panel>
          </Page>
        </Viewport>
      </Window>

      <BehindStrip>
        <BehindCell $width={249}>Taylor Swift - 1989 (www.palpon</BehindCell>
        <BehindCell $width={37}>3:27</BehindCell>
        <BehindCell $width={124}>Taylor Swift (www</BehindCell>
        <BehindCell $width={125}>(www.palpon-prc:</BehindCell>
        <BehindCell $width={80}>(www.palp</BehindCell>
      </BehindStrip>
      <DockArea>
        <Dock>
          {Object.keys(apps).map((name) => (
            <React.Fragment key={name}>
              {(name === "Word" || name === "Downloads") && <DockRule />}
              <DockIcon name={name} />
            </React.Fragment>
          ))}
        </Dock>
      </DockArea>
    </Desktop>
  );
}
